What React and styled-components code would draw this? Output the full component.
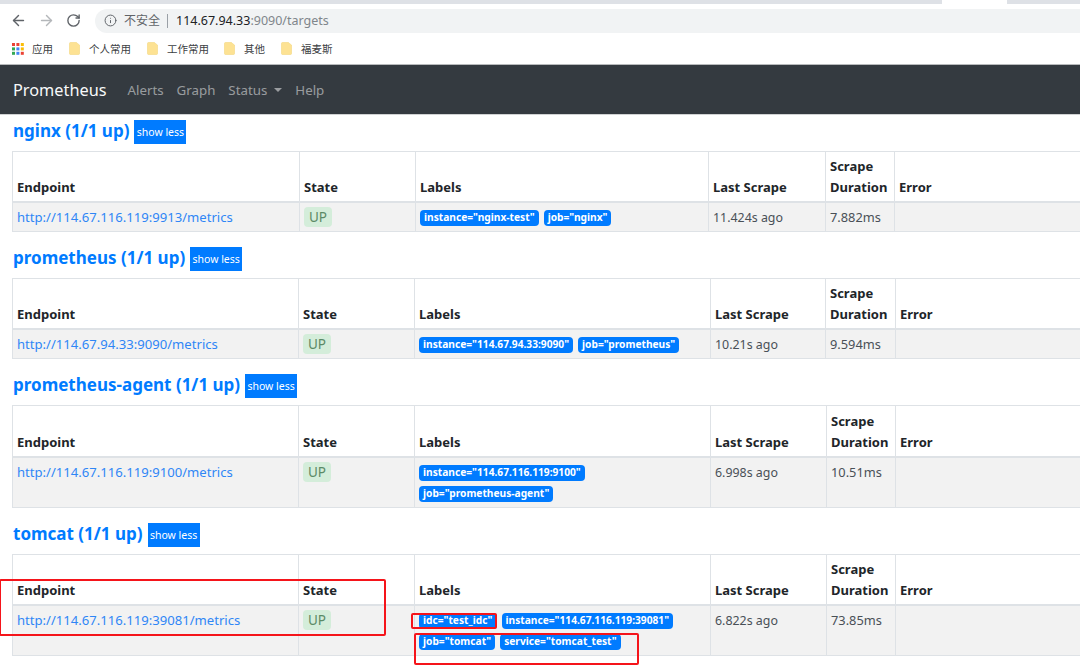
import React from "react";
import styled, { createGlobalStyle } from "styled-components";
import { ArrowLeft, ArrowRight, RotateCw, Info } from "lucide-react";

const UI_FONT = `"Noto Sans", "Noto Sans CJK SC", sans-serif`;

const Global = createGlobalStyle`
  *, *::before, *::after { box-sizing: border-box; }
  html, body { margin: 0; padding: 0; background: #fff; overflow: hidden; }
  body { width: 1080px; height: 670px; font-family: ${UI_FONT}; color: #212529; }
`;

const Page = styled.div`
  position: relative;
  width: 1080px;
  height: 670px;
  overflow: hidden;
`;

const TabStrip = styled.div`
  height: 4px;
  background: #dee1e6;
  display: flex;
  padding-left: 942px;
`;

const ActiveTab = styled.div`
  width: 65px;
  background: #fff;
`;

const Toolbar = styled.div`
  height: 29px;
  padding-top: 4px;
  display: flex;
  align-items: center;
`;

const NavIcon = styled.div`
  width: 17px;
  margin-left: ${(p) => p.$left}px;
  display: flex;
  color: ${(p) => p.$color};
`;

const Omnibox = styled.div`
  margin-left: 12px;
  flex: 1;
  height: 24px;
  border-radius: 12px 0 0 12px;
  background: #f1f3f4;
  display: flex;
  align-items: center;
  padding-left: 9px;
  font-size: 12px;
  color: #5f6368;
`;

const Insecure = styled.span`
  margin-left: 7px;
  padding-right: 7px;
  border-right: 1px solid #9aa0a6;
  line-height: 14px;
`;

const Host = styled.span`
  margin-left: 8px;
  color: #202124;
  font-size: 12.5px;
`;

const UrlRest = styled.span`
  color: #80868b;
  font-size: 12.5px;
`;

const Bookmarks = styled.div`
  height: 32px;
  display: flex;
  align-items: center;
  padding-left: 12px;
  font-size: 10.5px;
  color: #3c4043;
  border-bottom: 1px solid #b8babc;
`;

const Bookmark = styled.div`
  display: flex;
  align-items: center;
  gap: ${(p) => p.$gap}px;
  margin-right: ${(p) => p.$right}px;
`;

const Navbar = styled.nav`
  height: 50px;
  background: #343a40;
  display: flex;
  align-items: center;
  padding-left: 13px;
  border-bottom: 1px solid #d0d2d3;
`;

const Brand = styled.div`
  font-size: 16.3px;
  color: #f8f9fa;
  margin-right: 21px;
`;

const NavItem = styled.div`
  font-size: 13.3px;
  color: rgba(255, 255, 255, 0.5);
  margin-right: 13px;
  display: flex;
  align-items: center;
`;

const Caret = styled.span`
  margin-left: 7px;
  width: 0;
  height: 0;
  border-top: 4px solid rgba(255, 255, 255, 0.5);
  border-left: 4px solid transparent;
  border-right: 4px solid transparent;
`;

const Section = styled.section`
  padding-left: 12px;
  margin-bottom: 15px;
`;

const Heading = styled.div`
  height: 31px;
  display: flex;
  align-items: flex-start;
  gap: 5px;
`;

const Title = styled.h2`
  margin: 0 0 0 1px;
  font-size: 17px;
  line-height: 21px;
  font-weight: 700;
  color: #007bff;
`;

const ShowLess = styled.button`
  border: 0;
  padding: 0;
  width: 52px;
  height: 24px;
  background: #007bff;
  color: #fff;
  font-family: inherit;
  font-size: 10.5px;
`;

const Table = styled.table`
  table-layout: fixed;
  border-collapse: collapse;
  width: 1100px;
  font-size: 13.1px;

  th, td {
    border: 1px solid #dee2e6;
    padding: 0 4px;
    text-align: left;
  }
  th {
    height: ${(p) => p.$headHeight}px;
    vertical-align: bottom;
    padding-bottom: 3px;
    border-bottom-width: 2px;
    font-size: 13px;
    line-height: 21px;
    font-weight: 700;
    color: #212529;
  }
  td {
    background: #f2f2f2;
    height: ${(p) => p.$rowHeight}px;
    vertical-align: top;
    padding-top: 5px;
    color: #495057;
    line-height: 19px;
  }
`;

const Endpoint = styled.a`
  color: #2f86f6;
  text-decoration: none;
`;

const StateBadge = styled.span`
  display: inline-block;
  padding: 0 5px;
  line-height: 20px;
  border-radius: 4px;
  background: #d4edda;
  color: #5b8a66;
  font-size: 13.5px;
  margin-top: -1px;
  vertical-align: top;
`;

const Elapsed = styled.span`
  font-size: ${(p) => p.$size}px;
`;

const LabelBadge = styled.span`
  display: inline-block;
  height: 16px;
  line-height: 15px;
  padding: 0 4px;
  margin: 0 5px 5px 0;
  border-radius: 4px;
  background: #007bff;
  color: #fff;
  font-size: 10.2px;
  font-weight: 700;
  white-space: nowrap;
  vertical-align: top;
`;

const Labels = styled.div`
  margin-top: 2px;
  line-height: 0;
`;

// hand-drawn annotations sitting over the screenshot
const RedBox = styled.div`
  position: absolute;
  left: ${(p) => p.$x}px;
  top: ${(p) => p.$y}px;
  width: ${(p) => p.$w}px;
  height: ${(p) => p.$h}px;
  border: 2px solid #f5141a;
  border-radius: 2px;
`;

const AppsIcon = () => {
  const colors = ["#ea4335", "#ea4335", "#fbbc04", "#34a853", "#4285f4", "#fbbc04", "#34a853", "#4285f4", "#ea4335"];
  return (
    <svg width="12" height="12" viewBox="0 0 12 12">
      {colors.map((c, i) => (
        <rect key={i} x={(i % 3) * 4.4} y={Math.floor(i / 3) * 4.4} width="3" height="3" fill={c} />
      ))}
    </svg>
  );
};

const FolderIcon = () => (
  <svg width="11" height="13" viewBox="0 0 11 13">
    <path d="M0.5 1.5 Q0.5 0.5 1.5 0.5 H7 Q8 0.5 8.5 1.5 L10.5 3 V11.5 Q10.5 12.5 9.5 12.5 H1.5 Q0.5 12.5 0.5 11.5 Z" fill="#fde293" stroke="#f4d67e" strokeWidth="0.6" />
  </svg>
);

const targets = [
  {
    name: "nginx (1/1 up)",
    columns: [287, 116, 293, 117, 69],
    url: "http://114.67.116.119:9913/metrics",
    labels: ['instance="nginx-test"', 'job="nginx"'],
    last: "11.424s ago",
    duration: "7.882ms",
    headHeight: 50,
    rowHeight: 29,
  },
  {
    name: "prometheus (1/1 up)",
    columns: [286, 116, 296, 115, 70],
    url: "http://114.67.94.33:9090/metrics",
    labels: ['instance="114.67.94.33:9090"', 'job="prometheus"'],
    last: "10.21s ago",
    duration: "9.594ms",
    headHeight: 51,
    rowHeight: 28,
  },
  {
    name: "prometheus-agent (1/1 up)",
    columns: [286, 116, 296, 116, 69],
    url: "http://114.67.116.119:9100/metrics",
    labels: ['instance="114.67.116.119:9100"', 'job="prometheus-agent"'],
    last: "6.998s ago",
    duration: "10.51ms",
    headHeight: 51,
    rowHeight: 49,
  },
  {
    name: "tomcat (1/1 up)",
    columns: [286, 116, 296, 116, 69],
    url: "http://114.67.116.119:39081/metrics",
    labels: ['idc="test_idc"', 'instance="114.67.116.119:39081"', 'job="tomcat"', 'service="tomcat_test"'],
    last: "6.822s ago",
    duration: "73.85ms",
    headHeight: 51,
    rowHeight: 49,
  },
];

const TargetSection = ({ target }) => (
  <Section>
    <Heading>
      <Title>{target.name}</Title>
      <ShowLess>show less</ShowLess>
    </Heading>
    <Table $headHeight={target.headHeight} $rowHeight={target.rowHeight}>
      <colgroup>
        {target.columns.map((w, i) => (
          <col key={i} style={{ width: w }} />
        ))}
        <col />
      </colgroup>
      <thead>
        <tr>
          <th>Endpoint</th>
          <th>State</th>
          <th>Labels</th>
          <th>Last Scrape</th>
          <th>Scrape Duration</th>
          <th>Error</th>
        </tr>
      </thead>
      <tbody>
        <tr>
          <td><Endpoint>{target.url}</Endpoint></td>
          <td><StateBadge>UP</StateBadge></td>
          <td>
            <Labels>
              {target.labels.map((l) => (
                <LabelBadge key={l}>{l}</LabelBadge>
              ))}
            </Labels>
          </td>
          <td><Elapsed $size={12.4}>{target.last}</Elapsed></td>
          <td><Elapsed $size={12.8}>{target.duration}</Elapsed></td>
          <td></td>
        </tr>
      </tbody>
    </Table>
  </Section>
);

const Content = styled.main`
  padding-top: 5px;
`;

export default function App() {
  return (
    <Page>
      <Global />
      <TabStrip><ActiveTab /></TabStrip>
      <Toolbar>
        <NavIcon $left={10} $color="#5f6368"><ArrowLeft size={17} strokeWidth={2} /></NavIcon>
        <NavIcon $left={11} $color="#b4b7ba"><ArrowRight size={17} strokeWidth={2} /></NavIcon>
        <NavIcon $left={11} $color="#5f6368"><RotateCw size={15} strokeWidth={2.2} /></NavIcon>
        <Omnibox>
          <Info size={13} strokeWidth={1.8} />
          <Insecure>不安全</Insecure>
          <Host>114.67.94.33</Host>
          <UrlRest>:9090/targets</UrlRest>
        </Omnibox>
      </Toolbar>
      <Bookmarks>
        <Bookmark $gap={8} $right={16}><AppsIcon />应用</Bookmark>
        <Bookmark $gap={9} $right={16}><FolderIcon />个人常用</Bookmark>
        <Bookmark $gap={9} $right={15}><FolderIcon />工作常用</Bookmark>
        <Bookmark $gap={9} $right={16}><FolderIcon />其他</Bookmark>
        <Bookmark $gap={9} $right={16}><FolderIcon />福麦斯</Bookmark>
      </Bookmarks>
      <Navbar>
        <Brand>Prometheus</Brand>
        <NavItem>Alerts</NavItem>
        <NavItem>Graph</NavItem>
        <NavItem>Status<Caret /></NavItem>
        <NavItem>Help</NavItem>
      </Navbar>
      <Content>
        {targets.map((t) => (
          <TargetSection key={t.name} target={t} />
        ))}
      </Content>
      <RedBox $x={-1} $y={579} $w={387} $h={57} />
      <RedBox $x={411} $y={613} $w={86} $h={16} />
      <RedBox $x={414} $y={633} $w={225} $h={32} />
    </Page>
  );
}
